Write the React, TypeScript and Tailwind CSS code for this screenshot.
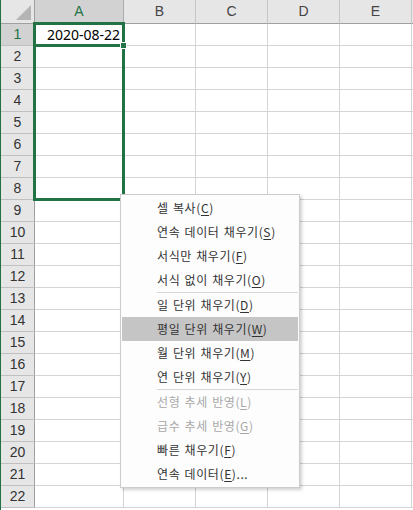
import React from "react";

const cols = ["A", "B", "C", "D", "E", ""];
const rows = Array.from({ length: 22 }, (_, i) => i + 1);

type Item = { label: string; key: string; tail?: string; disabled?: boolean; active?: boolean; sep?: boolean };

const items: Item[] = [
  { label: "셀 복사", key: "C" },
  { label: "연속 데이터 채우기", key: "S" },
  { label: "서식만 채우기", key: "F" },
  { label: "서식 없이 채우기", key: "O" },
  { label: "일 단위 채우기", key: "D", sep: true },
  { label: "평일 단위 채우기", key: "W", active: true },
  { label: "월 단위 채우기", key: "M" },
  { label: "연 단위 채우기", key: "Y" },
  { label: "선형 추세 반영", key: "L", disabled: true, sep: true },
  { label: "급수 추세 반영", key: "G", disabled: true },
  { label: "빠른 채우기", key: "F" },
  { label: "연속 데이터", key: "E", tail: "..." },
];

export default function App() {
  return (
    <div className="relative w-[413px] h-[510px] overflow-hidden bg-white border-l border-[#217346]">
      {/* Sheet grid */}
      <div
        className="grid grid-cols-[34px_89px_72px_72px_72px_72px_1fr]"
        style={{ fontFamily: "'Liberation Sans', Arial, sans-serif" }}
      >
        {/* Header row */}
        <div className="h-6 bg-[#e6e6e6] border-r border-b border-[#a0a0a0] flex items-end justify-end pr-[2px] pb-[2px]">
          <svg width="16" height="16" viewBox="0 0 16 16">
            <polygon points="0,15 15,15 15,0" fill="#b4b4b4" />
          </svg>
        </div>
        {cols.map((c, i) => (
          <div
            key={c + i}
            className={
              "h-6 border-r border-b flex items-center justify-center text-[14px] " +
              (i === 0
                ? "bg-[#d2d2d2] text-[#217346] border-r-[#ababab] border-b-[#a0a0a0]"
                : "bg-[#e6e6e6] text-[#444] border-r-[#c6c6c6] border-b-[#a0a0a0]")
            }
          >
            {c}
          </div>
        ))}

        {rows.map((r) => (
          <React.Fragment key={r}>
            <div
              className={
                "h-[22px] border-r border-b border-r-[#a0a0a0] border-b-[#c0c0c0] flex items-center justify-center text-[14px] " +
                (r === 1 ? "bg-[#d2d2d2] text-[#217346]" : "bg-[#e6e6e6] text-[#333]")
              }
            >
              {r}
            </div>
            {cols.map((c, i) => (
              <div
                key={c + i}
                className="h-[22px] border-r border-b border-[#d4d4d4] flex items-end justify-end pr-[3px]"
              >
                {r === 1 && i === 0 && (
                  <span
                    className="text-[14px] leading-[20px] text-black"
                    style={{ fontFamily: "'Noto Sans', sans-serif" }}
                  >
                    2020-08-22
                  </span>
                )}
              </div>
            ))}
          </React.Fragment>
        ))}
      </div>

      {/* Selection frames */}
      <div className="absolute left-[32px] top-[22px] w-[92px] h-[179px] border-[3px] border-[#217346] pointer-events-none" />
      <div className="absolute left-[32px] top-[22px] w-[92px] h-[25px] border-[3px] border-[#217346] pointer-events-none" />
      <div className="absolute left-[119px] top-[42px] w-[7px] h-[7px] bg-[#217346] border border-white" />

      {/* Context menu */}
      <div
        className="absolute left-[119px] top-[194px] w-[180px] bg-[#fdfdfd] border border-[#cccccc] shadow-[2px_2px_3px_rgba(0,0,0,0.18)] py-px px-px"
        style={{ fontFamily: "'Noto Sans CJK KR', 'Noto Sans', sans-serif" }}
      >
        {items.map((it, i) => (
          <React.Fragment key={i}>
            {it.sep && <div className="ml-[35px] h-px bg-[#d7d7d7]" />}
            <div
              className={
                "h-6 flex items-center pl-[35px] text-[12px] tracking-[0.6px] [word-spacing:1px] " +
                (it.active ? "bg-[#c5c5c5] " : "") +
                (it.disabled ? "text-[#a8a8a8]" : "text-[#333]")
              }
            >
              <span>
                {it.label}(<span className="underline underline-offset-2">{it.key}</span>){it.tail}
              </span>
            </div>
          </React.Fragment>
        ))}
      </div>
    </div>
  );
}
